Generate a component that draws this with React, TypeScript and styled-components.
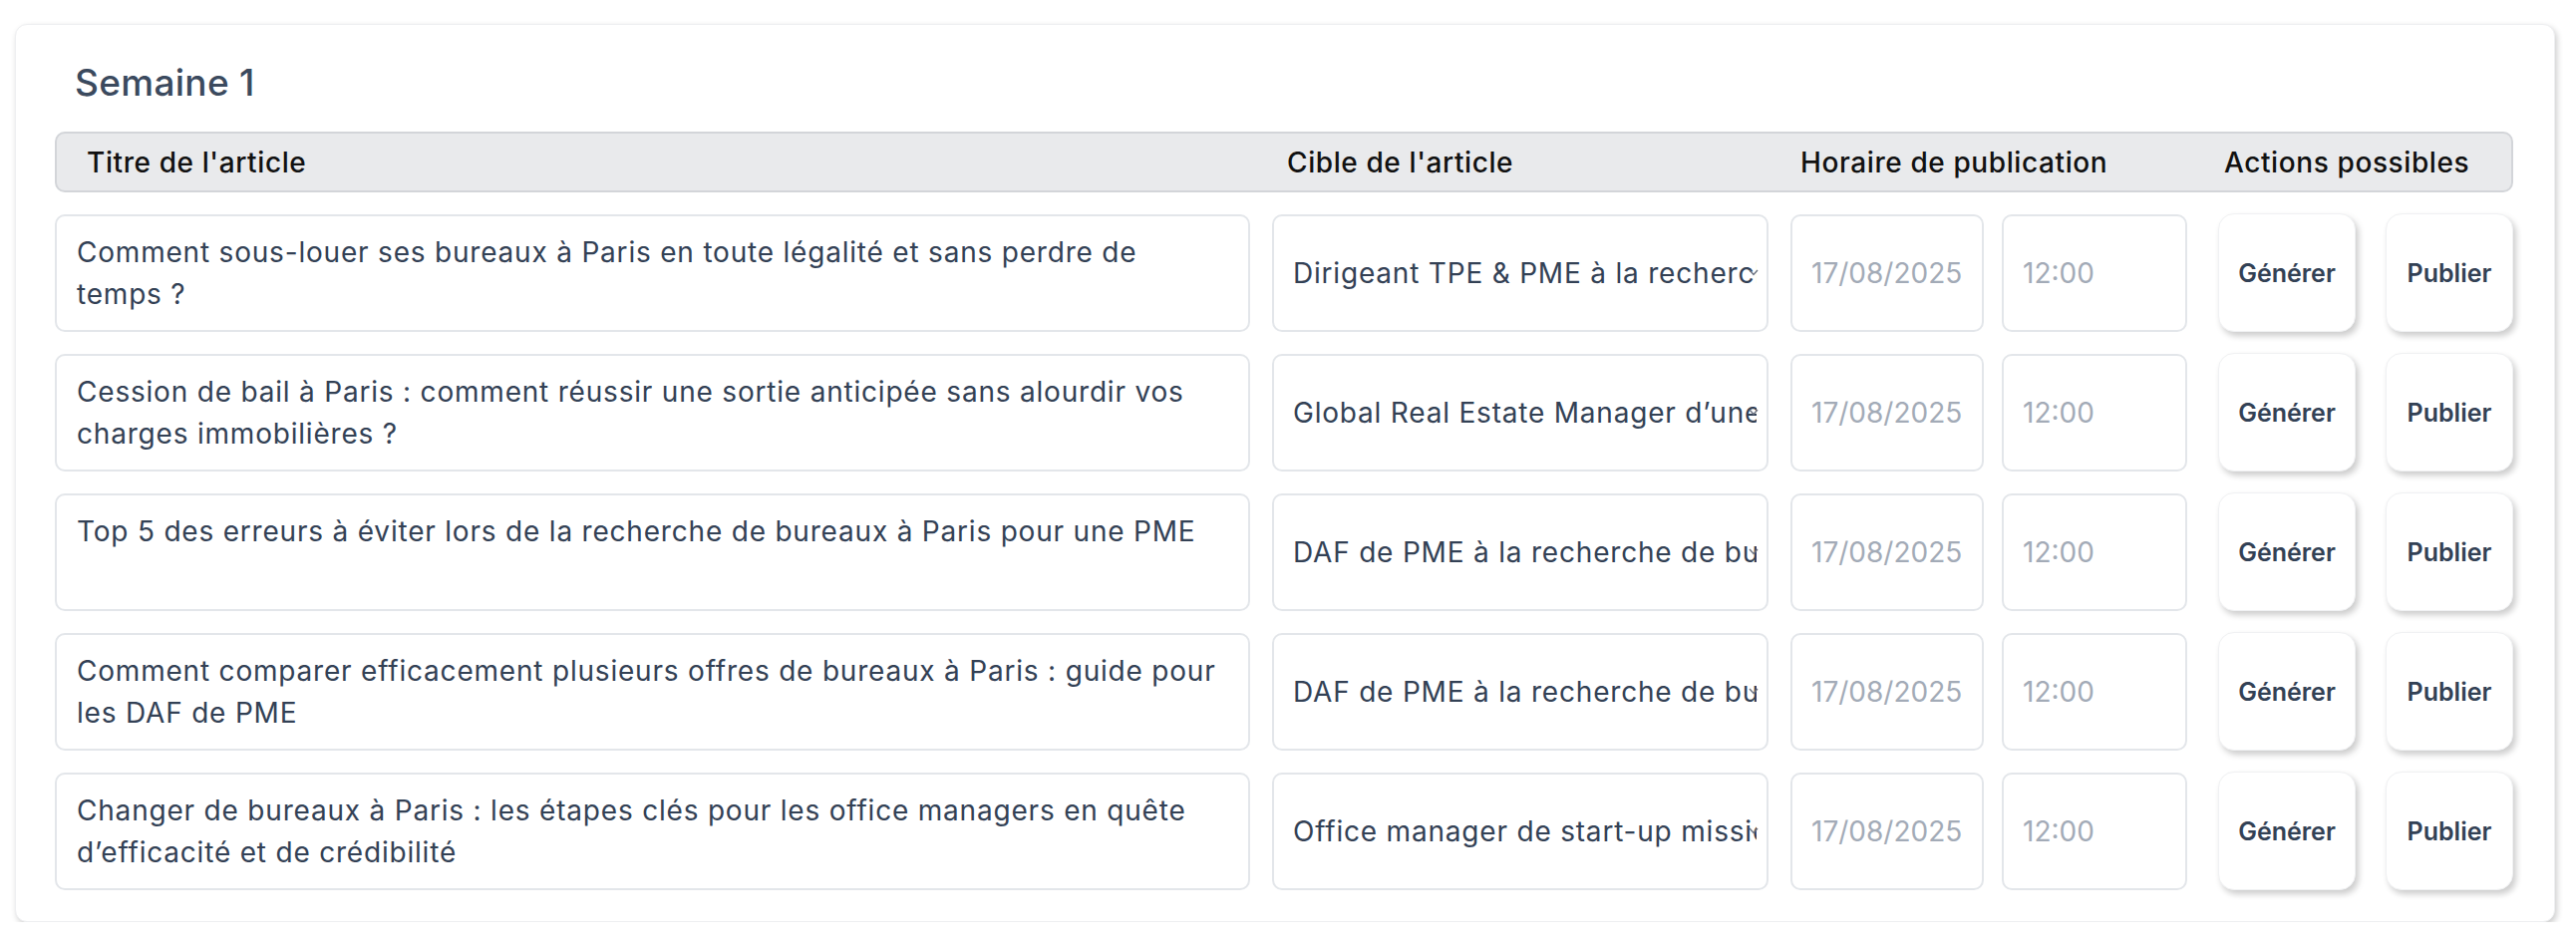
import React from 'react';
import styled, { createGlobalStyle } from 'styled-components';

type Article = {
  lines: string[];
  target: string;
  date: string;
  time: string;
}

const GlobalStyle = createGlobalStyle`
  body {
    margin: 0;
    background: #ffffff;
    font-family: Inter, "Open Sans", "DejaVu Sans", sans-serif;
  }
`

const Page = styled.div`
  padding: 24px 21px 0 15px;
`

const Card = styled.section`
  width: 2548px;
  box-sizing: border-box;
  background: #ffffff;
  border: 1px solid #eeeff1;
  border-radius: 12px;
  box-shadow: 2px 3px 6px rgba(0, 0, 0, 0.2);
  padding: 39px 41px 31px 39px;
`

const WeekTitle = styled.h2`
  margin: 0 0 31px 20px;
  font-size: 37px;
  line-height: 37px;
  font-weight: 500;
  letter-spacing: 0.3px;
  color: #3b4a5e;
`

const Columns = styled.div`
  display: grid;
  grid-template-columns: 1fr 498px 398px 305px;
  column-gap: 22px;
`

const HeaderBar = styled(Columns)`
  height: 61px;
  box-sizing: border-box;
  align-items: center;
  background: #e9eaec;
  border: 2px solid #d3d5d9;
  border-radius: 10px;
`

const HeadLabel = styled.div<{ $pad: number }>`
  padding-left: ${p => p.$pad}px;
  font-size: 28px;
  font-weight: 500;
  letter-spacing: 0.6px;
  color: #111111;
  white-space: nowrap;
`

const Rows = styled.div`
  display: flex;
  flex-direction: column;
  gap: 22px;
  margin-top: 22px;
`

const Row = styled(Columns)`
  height: 118px;
`

const Box = styled.div`
  box-sizing: border-box;
  height: 100%;
  background: #ffffff;
  border: 2px solid #e3e6ea;
  border-radius: 10px;
`

const TitleBox = styled(Box)`
  padding: 15px 20px;
  font-size: 28px;
  line-height: 42px;
  letter-spacing: 0.8px;
  color: #334155;
`

const Line = styled.div`
  white-space: nowrap;
`

const SelectBox = styled(Box)`
  position: relative;
  display: flex;
  align-items: center;
  padding: 0 10px 0 19px;
  overflow: hidden;
`

const SelectText = styled.span`
  flex: 1;
  overflow: hidden;
  white-space: nowrap;
  font-size: 28px;
  letter-spacing: 0.8px;
  color: #334155;
`

const Chevron = styled.svg`
  position: absolute;
  right: 8px;
  top: 50%;
  margin-top: -4px;
`

const Schedule = styled.div`
  display: flex;
  gap: 18px;
`

const Field = styled(Box)<{ $w: number }>`
  width: ${p => p.$w}px;
  display: flex;
  align-items: center;
  padding-left: 19px;
  font-size: 28px;
  color: #a3abb7;
`

const Actions = styled.div`
  display: flex;
  justify-content: flex-end;
  gap: 30px;
`

const ActionButton = styled.button<{ $w: number }>`
  width: ${p => p.$w}px;
  height: 119px;
  margin-top: -1px;
  background: #ffffff;
  border: 1px solid #f0f1f3;
  border-radius: 16px;
  box-shadow: 3px 4px 6px rgba(0, 0, 0, 0.2);
  font-family: inherit;
  font-size: 25px;
  font-weight: 600;
  color: #334155;
  cursor: pointer;
`

const articles: Article[] = [
  {
    lines: ['Comment sous-louer ses bureaux à Paris en toute légalité et sans perdre de', 'temps ?'],
    target: 'Dirigeant TPE & PME à la recherche de bureaux à Paris',
    date: '17/08/2025',
    time: '12:00',
  },
  {
    lines: ['Cession de bail à Paris : comment réussir une sortie anticipée sans alourdir vos', 'charges immobilières ?'],
    target: 'Global Real Estate Manager d’une entreprise internationale',
    date: '17/08/2025',
    time: '12:00',
  },
  {
    lines: ['Top 5 des erreurs à éviter lors de la recherche de bureaux à Paris pour une PME'],
    target: 'DAF de PME à la recherche de bureaux à Paris',
    date: '17/08/2025',
    time: '12:00',
  },
  {
    lines: ['Comment comparer efficacement plusieurs offres de bureaux à Paris : guide pour', 'les DAF de PME'],
    target: 'DAF de PME à la recherche de bureaux à Paris',
    date: '17/08/2025',
    time: '12:00',
  },
  {
    lines: ['Changer de bureaux à Paris : les étapes clés pour les office managers en quête', 'd’efficacité et de crédibilité'],
    target: 'Office manager de start-up missionné pour trouver des bureaux',
    date: '17/08/2025',
    time: '12:00',
  },
]

const App = () => {
  return (
    <Page>
      <GlobalStyle />
      <Card>
        <WeekTitle>Semaine 1</WeekTitle>
        <HeaderBar>
          <HeadLabel $pad={30}>Titre de l'article</HeadLabel>
          <HeadLabel $pad={17}>Cible de l'article</HeadLabel>
          <HeadLabel $pad={12}>Horaire de publication</HeadLabel>
          <HeadLabel $pad={17}>Actions possibles</HeadLabel>
        </HeaderBar>
        <Rows>
          {articles.map((a, i) => (
            <Row key={i}>
              <TitleBox>
                {a.lines.map((l, j) => <Line key={j}>{l}</Line>)}
              </TitleBox>
              <SelectBox>
                <SelectText>{a.target}</SelectText>
                <Chevron width="10" height="7" viewBox="0 0 10 7">
                  <path d="M1 1 L5 5.5 L9 1" fill="none" stroke="#6b7280" strokeWidth="1.4" />
                </Chevron>
              </SelectBox>
              <Schedule>
                <Field $w={194}>{a.date}</Field>
                <Field $w={186}>{a.time}</Field>
              </Schedule>
              <Actions>
                <ActionButton $w={138}>Générer</ActionButton>
                <ActionButton $w={128}>Publier</ActionButton>
              </Actions>
            </Row>
          ))}
        </Rows>
      </Card>
    </Page>
  );
}

export default App;
